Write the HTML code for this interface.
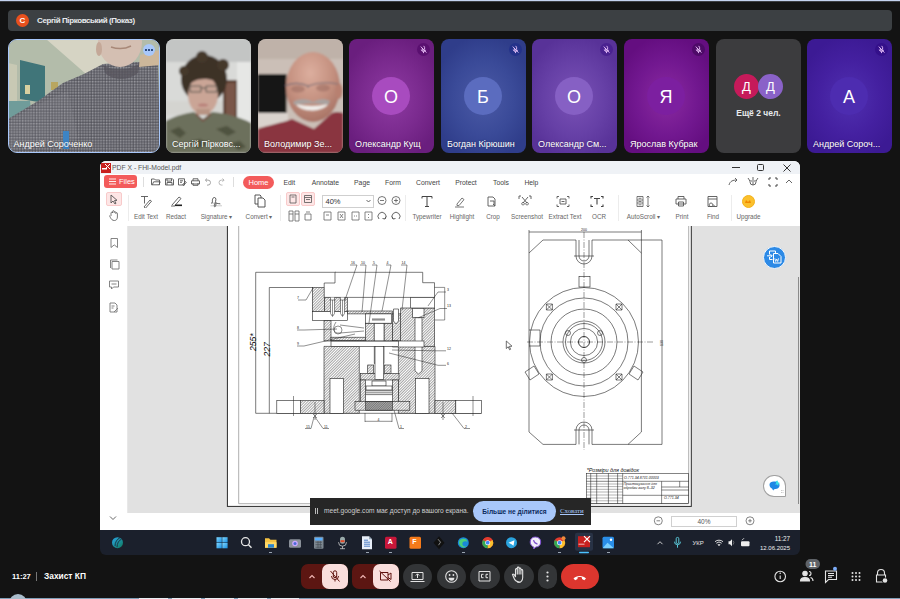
<!DOCTYPE html>
<html><head><meta charset="utf-8">
<style>
*{margin:0;padding:0;box-sizing:border-box}
html,body{width:900px;height:599px;overflow:hidden;background:#131313;font-family:"Liberation Sans",sans-serif}
.a{position:absolute}
#topline{left:0;top:0;width:900px;height:1px;background:#c4d3f0;box-shadow:0 1px 0 #3c3e42}
#banner{left:8px;top:10px;width:884px;height:21px;background:#3c4043;border-radius:4px}
#banner .av{left:8px;top:4px;width:13px;height:13px;border-radius:50%;background:#e8501d;color:#fff;font-size:8px;font-weight:bold;text-align:center;line-height:13px}
#banner .t{left:29px;top:4.5px;color:#e8eaed;font-size:8px;font-weight:bold;line-height:12px;letter-spacing:-0.4px}
.tile{top:39px;height:114px;width:85px;border-radius:8px;overflow:hidden}
.tile .nm{position:absolute;left:6px;bottom:3.5px;color:#fff;font-size:9px;line-height:11px;white-space:nowrap;text-shadow:0 0 2px rgba(0,0,0,.4)}
.tile .big{position:absolute;left:23px;top:38px;width:38px;height:38px;border-radius:50%;color:#fff;font-size:18px;text-align:center;line-height:41px}
.tile .mic{position:absolute;right:4px;top:4px;width:13px;height:13px;border-radius:50%}
.mb{position:absolute;top:564px;height:25px;border-radius:13px;background:#333537}
.lbl1{width:60px;text-align:center;font-size:6.8px;color:#444;line-height:10px}
.lbl2{width:60px;text-align:center;font-size:6.3px;color:#666;line-height:9px;white-space:nowrap}
.sep{width:1px;background:#ececec}
</style></head><body>
<div class="a" id="topline"></div>
<div class="a" id="banner"><div class="a av">С</div><div class="a t">Сергій Пірковський (Показ)</div></div>

<!-- tile 1 -->
<div class="a tile" style="left:8px;width:152px;border:1.5px solid #a8c7fa;border-radius:9px;background:#8a8f8a">
<svg class="a" style="left:-1.5px;top:-1.5px" width="152" height="114" viewBox="0 0 152 114"><defs><pattern id="chk" width="2.8" height="2.8" patternUnits="userSpaceOnUse"><rect width="2.8" height="2.8" fill="#67676e"/><rect width="1.4" height="1.4" fill="#a4a4aa"/><rect x="1.4" y="1.4" width="1.4" height="1.4" fill="#4c4c54"/></pattern></defs><defs><filter id="bl1" x="-5%" y="-5%" width="110%" height="110%"><feGaussianBlur stdDeviation="0.5"/></filter></defs><g filter="url(#bl1)">
<rect width="152" height="114" fill="#b3bcaa"/>
<polygon points="38,0 104,0 104,40 78,35" fill="#d6d4c4"/>
<polygon points="0,24 9,26 9,62 0,62" fill="#c8c9b4"/>
<polygon points="12,21 37,27 37,64 12,60" fill="#407479"/>
<rect x="17" y="46" width="5" height="9" fill="#d8d0a0"/>
<rect x="43" y="43" width="7" height="8" fill="#b8a660"/>
<polygon points="0,62 22,62 24,80 0,82" fill="#6f9c9a"/>
<path d="M0,80 L30,62 L55,44 L76,35 L95,25 L150,22 L152,114 L0,114 Z" fill="url(#chk)"/>
<path d="M0,80 L30,62 L55,44 L76,35 L95,25 L150,22 L152,114 L0,114 Z" fill="#707078" opacity="0.25"/><path d="M0,82 C20,70 40,60 60,52 L70,100 L0,110 Z" fill="#9a9aa0" opacity="0.15"/>
<ellipse cx="112" cy="3" rx="22" ry="25" fill="#d4bfb2"/>
<ellipse cx="91" cy="10" rx="3" ry="7" fill="#c4a898"/>
<path d="M103,8 C109,10 117,10 123,7" stroke="#a88878" stroke-width="1.5" fill="none"/>
<path d="M95,26 C104,32 122,32 132,24 L130,34 C120,42 106,42 97,34 Z" fill="#55535b" opacity="0.7"/>
<polygon points="132,16 152,11 152,26 131,28" fill="#cdb79a"/>
<rect x="55" y="92" width="6" height="18" fill="#3c84c4"/>
</g></svg>
<div class="nm" style="left:4.5px;bottom:2.5px">Андрей Сороченко</div>
<div class="a" style="left:134px;top:4px;width:12px;height:12px;border-radius:50%;background:#a8c7fa"></div>
<div class="a" style="left:136.3px;top:9.1px;width:1.8px;height:1.8px;border-radius:50%;background:#0b2a5c"></div><div class="a" style="left:139.1px;top:9.1px;width:1.8px;height:1.8px;border-radius:50%;background:#0b2a5c"></div><div class="a" style="left:141.9px;top:9.1px;width:1.8px;height:1.8px;border-radius:50%;background:#0b2a5c"></div>
</div>

<!-- tile 2 -->
<div class="a tile" style="left:166px;background:#cfd0ce">
<svg class="a" style="left:0;top:0" width="85" height="114" viewBox="0 0 85 114"><defs><filter id="bl2" x="-5%" y="-5%" width="110%" height="110%"><feGaussianBlur stdDeviation="0.85"/></filter></defs><g filter="url(#bl2)">
<rect width="85" height="114" fill="#d9dad8"/>
<rect width="85" height="23" fill="#c3c5c4"/>
<rect x="0" y="62" width="85" height="14" fill="#d4d4d0"/>
<rect x="57" y="41" width="14" height="42" fill="#5e4236"/>
<rect x="60" y="44" width="9" height="34" fill="#7a5648"/>
<rect x="71" y="23" width="14" height="60" fill="#e6e7e5"/>
<ellipse cx="38" cy="40" rx="23" ry="24" fill="#3d3128"/><circle cx="18" cy="32" r="5" fill="#45372c"/><circle cx="57" cy="26" r="6" fill="#45372c"/><circle cx="36" cy="18" r="6" fill="#45372c"/>
<ellipse cx="37" cy="56" rx="15" ry="19.5" fill="#caa596"/>
<path d="M21,48 C24,38 32,34 40,35 C48,36 54,40 56,48 C52,42 46,40 38,40 C30,40 25,43 21,48 Z" fill="#3d3128"/>
<ellipse cx="37" cy="66" rx="5" ry="1.6" fill="#b87f78"/>
<path d="M24,47 h11 v6 h-11 z M40,47 h11 v6 h-11 z M35,49 h5" stroke="#4a4a44" stroke-width="0.9" fill="#bfa090" fill-opacity="0.4"/>
<rect x="30" y="70" width="14" height="6" fill="#b89484"/>
<path d="M0,114 L0,82 C10,76 22,74 28,73 L37,80 L46,73 C58,74 75,78 85,84 L85,114 Z" fill="#6c6f5b"/>
<path d="M4,92 l9,-4 l7,6 l-6,5 z M50,90 l11,-3 l9,6 l-8,4 z M22,104 l12,-4 l8,5 l-10,5 z M66,104 l8,-2 l6,6 l-8,3 z" fill="#50533f"/>
<path d="M30,75 L37,82 L45,75" stroke="#7a4a40" stroke-width="1.2" fill="none"/>
</g></svg>
<div class="nm">Сергій Пірковс...</div>
</div>

<!-- tile 3 -->
<div class="a tile" style="left:258px;background:#c4b7ae">
<svg class="a" style="left:0;top:0" width="85" height="114" viewBox="0 0 85 114"><defs><radialGradient id="hd" cx="0.45" cy="0.3" r="0.7"><stop offset="0" stop-color="#dcae9e"/><stop offset="0.6" stop-color="#c4907f"/><stop offset="1" stop-color="#a87466"/></radialGradient><filter id="bl3" x="-5%" y="-5%" width="110%" height="110%"><feGaussianBlur stdDeviation="0.8"/></filter></defs><g filter="url(#bl3)">
<rect width="85" height="114" fill="#cbbfb7"/>
<rect y="0" width="85" height="20" fill="#bfb2a9"/>
<rect x="0" y="35" width="28.5" height="39" fill="#141212"/>
<rect x="0" y="74" width="30" height="14" fill="#dad3ce"/>
<ellipse cx="55" cy="48" rx="27" ry="35" fill="url(#hd)"/>
<ellipse cx="81" cy="52" rx="3.5" ry="8" fill="#b88070"/>
<ellipse cx="40" cy="50" rx="7" ry="3.5" fill="#9c6e62" opacity="0.6"/><ellipse cx="65" cy="49" rx="7" ry="3.5" fill="#9c6e62" opacity="0.6"/><path d="M27,47 C34,43 44,44 50,47 C58,44 70,43 80,45 M50,47 v2" stroke="#7a7078" stroke-width="1.2" fill="none"/>
<path d="M35,63 C42,59 50,60 55,63 C60,60 66,59 72,62 L70,66 C62,64 46,64 37,66 Z" fill="#a9a3a0"/>
<path d="M39,66 C46,72 60,73 69,66 C60,68 48,68 39,66 Z" fill="#f3f1ef" stroke="#ece8e4" stroke-width="1.5"/>
<path d="M0,114 L0,90 C10,86 24,84 34,80 L56,90 L74,74 C80,72 85,74 85,74 L85,114 Z" fill="#8a3541"/>
</g></svg>
<div class="nm">Володимир Зе...</div>
</div>

<!-- tile 4 -->
<div class="a tile" style="left:349px;background:radial-gradient(ellipse 60% 55% at 50% 52%,#8e3aa2 0%,#7a2a8e 60%,#6a1e7e 100%)">
<div class="mic" style="background:#5a1070"><svg width="13" height="13" viewBox="0 0 13 13" style="position:absolute;left:0;top:0"><path d="M6.5,3.3 a1.1,1.1 0 0 1 1.1,1.1 v2.3 M5.4,5 v1.8 a1.1,1.1 0 0 0 1.9,0.7 M4.3,6.6 a2.2,2.2 0 0 0 4.3,0.3 M6.5,8.9 v1.2 M3.8,3.6 l5.6,6" stroke="#f0c8ff" stroke-width="0.9" fill="none"/></svg></div>
<div class="big" style="background:#a84bbf">О</div>
<div class="nm">Олександр Кущ</div>
</div>
<!-- tile 5 -->
<div class="a tile" style="left:441px;background:radial-gradient(ellipse 60% 55% at 50% 52%,#4b5aa6 0%,#3a4a98 60%,#2f3d8a 100%)">
<div class="mic" style="background:#24328a"><svg width="13" height="13" viewBox="0 0 13 13" style="position:absolute;left:0;top:0"><path d="M6.5,3.3 a1.1,1.1 0 0 1 1.1,1.1 v2.3 M5.4,5 v1.8 a1.1,1.1 0 0 0 1.9,0.7 M4.3,6.6 a2.2,2.2 0 0 0 4.3,0.3 M6.5,8.9 v1.2 M3.8,3.6 l5.6,6" stroke="#f0c8ff" stroke-width="0.9" fill="none"/></svg></div>
<div class="big" style="background:#5b6cbf">Б</div>
<div class="nm">Богдан Кірюшин</div>
</div>
<!-- tile 6 -->
<div class="a tile" style="left:532px;background:radial-gradient(ellipse 60% 55% at 50% 52%,#7a52b6 0%,#6640a6 60%,#583298 100%)">
<div class="mic" style="background:#4a2290"><svg width="13" height="13" viewBox="0 0 13 13" style="position:absolute;left:0;top:0"><path d="M6.5,3.3 a1.1,1.1 0 0 1 1.1,1.1 v2.3 M5.4,5 v1.8 a1.1,1.1 0 0 0 1.9,0.7 M4.3,6.6 a2.2,2.2 0 0 0 4.3,0.3 M6.5,8.9 v1.2 M3.8,3.6 l5.6,6" stroke="#f0c8ff" stroke-width="0.9" fill="none"/></svg></div>
<div class="big" style="background:#8660c4">О</div>
<div class="nm">Олександр См...</div>
</div>
<!-- tile 7 -->
<div class="a tile" style="left:624px;background:radial-gradient(ellipse 60% 55% at 50% 52%,#8a2aa0 0%,#721890 60%,#640e80 100%)">
<div class="mic" style="background:#4e0a68"><svg width="13" height="13" viewBox="0 0 13 13" style="position:absolute;left:0;top:0"><path d="M6.5,3.3 a1.1,1.1 0 0 1 1.1,1.1 v2.3 M5.4,5 v1.8 a1.1,1.1 0 0 0 1.9,0.7 M4.3,6.6 a2.2,2.2 0 0 0 4.3,0.3 M6.5,8.9 v1.2 M3.8,3.6 l5.6,6" stroke="#f0c8ff" stroke-width="0.9" fill="none"/></svg></div>
<div class="big" style="background:#7c1fa0">Я</div>
<div class="nm">Ярослав Кубрак</div>
</div>
<!-- tile 8 -->
<div class="a tile" style="left:716px;background:#3c3c3e">
<div class="a" style="left:18px;top:35px;width:25px;height:25px;border-radius:50%;background:#c61a5a;color:#fff;font-size:13px;text-align:center;line-height:25px">Д</div>
<div class="a" style="left:42px;top:35px;width:25px;height:25px;border-radius:50%;background:#8a62c8;color:#fff;font-size:13px;text-align:center;line-height:25px">Д</div>
<div class="a" style="left:0;top:69px;width:85px;text-align:center;color:#e8eaed;font-size:8.5px;font-weight:bold">Ещё 2 чел.</div>
</div>
<!-- tile 9 -->
<div class="a tile" style="left:807px;background:radial-gradient(ellipse 60% 55% at 50% 52%,#5030b0 0%,#4420a0 60%,#3c1a94 100%)">
<div class="mic" style="background:#34108a"><svg width="13" height="13" viewBox="0 0 13 13" style="position:absolute;left:0;top:0"><path d="M6.5,3.3 a1.1,1.1 0 0 1 1.1,1.1 v2.3 M5.4,5 v1.8 a1.1,1.1 0 0 0 1.9,0.7 M4.3,6.6 a2.2,2.2 0 0 0 4.3,0.3 M6.5,8.9 v1.2 M3.8,3.6 l5.6,6" stroke="#f0c8ff" stroke-width="0.9" fill="none"/></svg></div>
<div class="big" style="background:#4d2cb0">А</div>
<div class="nm">Андрей Сороч...</div>
</div>

<!-- PDF WINDOW -->
<div id="win" class="a" style="left:100px;top:161px;width:700px;height:394px;border-radius:6px;overflow:hidden">
<div class="a" style="left:0;top:0;width:700px;height:369px;background:#fff"></div>
<div class="a" style="left:0;top:0;width:700px;height:12.5px;background:#eff2f6"></div>
<div class="a" style="left:0;top:64.6px;width:700px;height:287px;background:#e1e1e1"></div>
<div class="a" style="left:0;top:64.6px;width:28px;height:287px;background:#fff;border-right:1px solid #e8e8e8"></div>
<div class="a" style="left:0;top:368.8px;width:700px;height:26px;background:#1b202c"></div>
</div>
<!-- drawing -->
<div class="a" style="left:128px;top:225.6px;width:672px;height:286.7px;overflow:hidden">
<svg class="a" style="left:-128px;top:-225.6px" width="900" height="599" viewBox="0 0 900 599">
<defs>
<pattern id="h" width="1.95" height="1.95" patternUnits="userSpaceOnUse" patternTransform="rotate(45)"><rect width="1.95" height="1.95" fill="#fff"/><line x1="0" y1="0" x2="0" y2="1.95" stroke="#3a3a3a" stroke-width="0.9"/></pattern>
<pattern id="hx" width="1.6" height="1.6" patternUnits="userSpaceOnUse" patternTransform="rotate(45)"><rect width="1.6" height="1.6" fill="#aaa"/><line x1="0" y1="0" x2="0" y2="1.6" stroke="#333" stroke-width="0.7"/></pattern>
</defs>
<!-- page -->
<rect x="227.4" y="150" width="463.9" height="356.4" fill="#fff" stroke="#2a2a2a" stroke-width="1"/>
<path d="M238.7,150 V503.7 H688.7 V150" fill="none" stroke="#9a9a9a" stroke-width="0.8"/>
<g stroke="#222" stroke-width="0.6" fill="none">
<!-- dims left -->
<path d="M255.7,272.3 V413.3 M255.7,272.3 H336 M269.3,287.5 V413.3 M269.3,287.5 H312.5 M255.7,413.3 H481.5"/>
</g>
<text x="0" y="0" transform="translate(256,351) rotate(-90)" font-size="8.6" font-style="italic" fill="#111" font-family="Liberation Sans">255*</text>
<text x="0" y="0" transform="translate(269.5,356.5) rotate(-90)" font-size="8.6" font-style="italic" fill="#111" font-family="Liberation Sans">227</text>
<!-- hatched bodies -->
<g stroke="#222" stroke-width="0.6">
<rect x="312.3" y="287.6" width="12.2" height="23.9" fill="url(#h)"/>
<rect x="324.5" y="297.5" width="22.8" height="14" fill="url(#h)"/>
<rect x="347.3" y="311" width="45" height="2.9" fill="url(#h)"/>
<rect x="400.7" y="308" width="34" height="38.4" fill="url(#h)"/>
<rect x="324" y="320.3" width="7" height="20.7" fill="url(#h)"/>
<rect x="331" y="337.2" width="34.4" height="3.5" fill="url(#h)"/>
<rect x="365.4" y="323.2" width="8.8" height="22.2" fill="url(#h)"/>
<rect x="384" y="323.2" width="8.5" height="22.2" fill="url(#h)"/>
<rect x="392.5" y="313.9" width="8.2" height="27.1" fill="url(#h)"/>
<!-- columns -->
<path d="M324,346.4 H359.3 V413.3 H324 Z" fill="url(#h)"/>
<path d="M398.4,346.4 H435 V413.3 H398.4 Z" fill="url(#h)"/>
<rect x="300.6" y="400.6" width="23.4" height="12.7" fill="url(#h)"/>
<rect x="435" y="400.6" width="20.8" height="12.7" fill="url(#h)"/>
<!-- slots -->
<rect x="330" y="378.6" width="13.3" height="34.7" fill="#fff"/>
<rect x="415.5" y="378.6" width="13.5" height="34.7" fill="#fff"/>
<!-- bolt right -->
<rect x="412.7" y="308.2" width="11.3" height="9.5" fill="#fff"/>
<path d="M415,317.7 H422 V371 L418.5,374 L415,371 Z" fill="#fff"/>
<rect x="392.7" y="341" width="31.3" height="6" fill="#fff"/>
<!-- feet -->
<rect x="276.8" y="400.6" width="23.8" height="12.7" fill="#fff"/>
<rect x="455.8" y="400.6" width="25.7" height="12.7" fill="#fff"/>
<!-- inner -->
<rect x="367.7" y="365" width="6" height="8.4" fill="url(#h)"/>
<rect x="384.4" y="365" width="6.6" height="8.4" fill="url(#h)"/>
<rect x="360.3" y="373.4" width="38.7" height="6.6" fill="url(#h)"/>
<rect x="360.3" y="380" width="5.4" height="26.8" fill="url(#h)"/>
<rect x="392.4" y="380" width="6" height="26.8" fill="url(#h)"/>
<rect x="355" y="401.5" width="54.8" height="8.7" fill="url(#h)"/>
<rect x="365.7" y="401.5" width="26.7" height="8.7" fill="url(#hx)"/>
</g>
<!-- white blocks / outlines -->
<g stroke="#222" stroke-width="0.6" fill="#fff">
<path d="M335,272.3 H422.7 V282.7 H434.5 V297.4 H324.2 V283 H335 Z"/>
<rect x="312.3" y="311.5" width="35" height="8.8"/>
<path d="M330.5,297.5 v16 l2,3 l2,-3 v-16 z M340.5,297.5 v16 l2,3 l2,-3 v-16 z" fill="#fff" stroke="none"/>
<rect x="410.7" y="297.4" width="23.8" height="10.6"/>
<rect x="374.2" y="323.2" width="9.8" height="40"/>
<rect x="365.4" y="313.9" width="26.3" height="9.3"/>
<path d="M372,319 h13 M372,320 h13" fill="none"/>
<path d="M393.5,309 h5 v12 l-2.5,3 l-2.5,-3 z" fill="#fff"/>
<rect x="331" y="341" width="67.4" height="5.4"/>
<rect x="375" y="346.4" width="8.7" height="33"/>
<rect x="372" y="381" width="14" height="5"/>
<rect x="366" y="386" width="26" height="4"/>
<path d="M365.7,390.8 H392.4 M365.7,392.8 H392.4 M365.7,394.6 H392.4" fill="none"/>
</g>
<g stroke="#222" stroke-width="0.5" fill="none">
<path d="M434.5,287.4 H444.7 V320 H434.7"/>
<path d="M331,341 H398.4"/>
<!-- lever -->
<path d="M336,322 C332,328 333,334 340,333 L364,331 M340,325 L364,328"/>
<circle cx="338" cy="330" r="4"/>
<!-- small bolts left -->
<path d="M330.5,297.5 v16 l2,3 l2,-3 v-16 M340.5,297.5 v16 l2,3 l2,-3 v-16 M329.5,300 h6 M339.5,300 h6 M332.5,300 v16 M342.5,300 v16"/>
<!-- leaders -->
<path d="M298,300 L306,300 L313,288 M297,330 L304,330 L337,329 M297,346 L304,346 L355,334 M350,265 L357,265 L345,300 M360,265 L366,265 L362,312 M372,265 L377,265 L369,323 M386,265 L391,265 L382,311 M401,265 L407,265 L402,310 M446,292 L438,292 L428,306 M447,308.5 L440,308.5 L418.5,317.7 M446,350.8 L434,350.8 M434,350.8 L392,350 M446,365.3 L438,365.3 L389,353 M464,428.5 L470,428.5 M464,428.5 L452,413 M399,428.5 L404,428.5 M399,428.5 L394,410 M323,428.5 L329,428.5 M323,428.5 L315,417 M305,428.5 L311,428.5 M311,428.5 L314,417 M293.5,396 V416 M473,396 V416"/>
<path d="M365,413 V422 M392,413 V422 M365,421.3 H392"/>
<path d="M315,402 V420 M313,414 l2,2 l2,-2 M313,418 l2,-2 l2,2 M443,402 V420 M441,414 l2,2 l2,-2 M441,418 l2,-2 l2,2"/>
</g>
<g font-family="Liberation Sans" font-size="3.5" fill="#222">
<text x="351" y="264">16</text><text x="361" y="264">10</text><text x="373" y="264">5</text><text x="386.5" y="264">4</text><text x="401.5" y="264">14</text>
<text x="297" y="299">7</text><text x="297" y="329">8</text><text x="297" y="345">9</text>
<text x="447" y="291">3</text><text x="447" y="307">13</text><text x="447" y="350">12</text><text x="447" y="364.5">6</text>
<text x="306" y="427.5">15</text><text x="324" y="427.5">11</text><text x="377.5" y="420.5">4</text><text x="400" y="427.5">1</text><text x="465" y="427.5">2</text>
</g>
<!-- right view -->
<g stroke="#222" stroke-width="0.6" fill="none">
<path d="M529,232 H641.4 M529,230 V253 M641.4,230 V253"/>
<path d="M543,240 H576 M592,240 H628 M529,253 L543,240 M628,240 L641.4,253 M529,253 V432 L543,444.4 H576 M592,444.4 H628 L641.4,432 V253"/>
<path d="M628,240 H662 M628,444.4 H662 M662,240 V444.4"/>
<path d="M576,240 V256 A8,8 0 0 0 592,256 V240 M579,240 V256 A5,5 0 0 0 589,256 V240 M574,256 H594"/>
<path d="M576,444.4 V430 A8,8 0 0 1 592,430 V444.4 M579,444.4 V430 A5,5 0 0 1 589,430 V444.4 M574,430 H594"/>
<rect x="579" y="276.6" width="11" height="10.4"/>
<circle cx="584" cy="342" r="54.5"/>
<circle cx="584" cy="342" r="44"/>
<circle cx="584" cy="342" r="33"/>
<circle cx="584" cy="342" r="21"/>
<circle cx="584" cy="342" r="18.5"/>
<circle cx="584" cy="342" r="13.6"/>
<circle cx="584" cy="342" r="5.5" stroke-width="0.9"/>
<path d="M527,342 H653 M584,232 V450" stroke-dasharray="6,1.5,1,1.5" stroke-width="0.45"/>
<path d="M529,330 h11 v16 h-11 M525,372 l9,-6 l5,8 l-9,6 z M643,372 l-9,-6 l-5,8 l9,6 z"/>
<path d="M546.4,304 l6,6 m0,-6 l-6,6 M546.4,304 h6 v6 h-6 z M616,304 l6,6 m0,-6 l-6,6 M616,304 h6 v6 h-6 z"/>
<path d="M546.4,374 l6,6 m0,-6 l-6,6 M546.4,374 h6 v6 h-6 z M616,374 l6,6 m0,-6 l-6,6 M616,374 h6 v6 h-6 z"/>
<circle cx="568" cy="333" r="2.5"/><circle cx="600" cy="333" r="2.5"/><circle cx="584" cy="360" r="2.5"/>
</g>
<g font-family="Liberation Sans" font-size="3.5" fill="#222"><text x="581" y="231">200</text><text x="0" y="0" transform="translate(663,346) rotate(-90)">130</text></g>
<path d="M506.3,341 V348.5 L508.2,346.8 L509.6,349.8 L510.6,349.3 L509.3,346.4 L512,346.2 Z" fill="#fff" stroke="#333" stroke-width="0.7"/>
<!-- title block -->
<text x="586.7" y="472" font-family="Liberation Sans" font-size="5.4" font-style="italic" fill="#111">*Розміри для довідок</text>
<g stroke="#222" stroke-width="0.55" fill="none">
<rect x="586.4" y="473.3" width="102.3" height="30.4"/>
<path d="M590.7,473.3 V503.7 M596.7,473.3 V503.7 M608.4,473.3 V503.7 M617.6,473.3 V503.7 M622.7,473.3 V503.7 M586.4,481.3 H688.7 M622.7,495.3 H688.7 M661.6,481.3 V503.7 M679.7,481.3 V487 M661.6,487 H688.7 M661.6,490 H688.7"/>
<path d="M586.4,476 H622.7 M586.4,478.6 H622.7 M586.4,484 H622.7 M586.4,486.6 H622.7 M586.4,489.3 H622.7 M586.4,492 H622.7 M586.4,495 H622.7 M586.4,498 H622.7 M586.4,500.8 H622.7" stroke-width="0.35"/>
</g>
<g font-family="Liberation Sans" font-size="3.6" font-style="italic" fill="#222"><text x="624" y="478.6">О.771.34.8701.00003</text><text x="623.5" y="485">Пристосування для</text><text x="623.5" y="489">обробки валу 8–32</text><text x="664" y="499">О.771.34</text></g>
</svg>
</div>

<!-- title -->
<svg class="a" style="left:100.5px;top:162.5px" width="10" height="10" viewBox="0 0 10 10"><rect width="10" height="10" fill="#c8201e"/><path d="M4,1 L9,6 M9,1 L5,5" stroke="#fff" stroke-width="1"/><rect x="1" y="5" width="5" height="1.5" fill="#fff"/></svg>
<div class="a" style="left:112px;top:163px;font-size:6.8px;color:#555;line-height:10px">PDF X - FHI-Model.pdf</div>
<div class="a" style="left:732px;top:167px;width:8px;height:1px;background:#333"></div>
<div class="a" style="left:757px;top:164px;width:7px;height:7px;border:1px solid #333;border-radius:1.5px"></div>
<svg class="a" style="left:783px;top:163.5px" width="8" height="8" viewBox="0 0 8 8"><path d="M0.5,0.5 L7.5,7.5 M7.5,0.5 L0.5,7.5" stroke="#333" stroke-width="1"/></svg>
<!-- ribbon row1 -->
<div class="a" style="left:104px;top:175px;width:33px;height:13px;background:#f35b5b;border-radius:3px"></div><div class="a" style="left:119px;top:175px;color:#fff;font-size:7.5px;line-height:13px">Files</div>
<svg class="a" style="left:109px;top:178px" width="7" height="7" viewBox="0 0 7 7"><path d="M0,1 H7 M0,3.5 H7 M0,6 H7" stroke="#fff" stroke-width="0.9"/></svg>
<div class="a" style="left:142.5px;top:177px;width:1px;height:10px;background:#ddd"></div>
<div class="a" style="left:233px;top:177px;width:1px;height:10px;background:#ddd"></div>
<div class="a" style="left:243px;top:175.5px;width:31px;height:13px;background:#f35b5b;border-radius:7px;color:#fff;font-size:7.5px;line-height:13px;text-align:center">Home</div>
<!-- sidebar icons -->
<svg class="a" style="left:107px;top:236px" width="14" height="80" viewBox="0 0 14 80">
<path d="M4,2.5 h6.5 v9 l-3.25,-2.6 l-3.25,2.6 z" stroke="#777" stroke-width="0.9" fill="none"/>
<path d="M3.5,32 v-8 h7 M5,25.5 h7 v7.5 h-7 z" stroke="#777" stroke-width="0.9" fill="none"/>
<path d="M2.5,45 h9 v6 h-5 l-2,2 v-2 h-2 z M4.5,48 h5" stroke="#777" stroke-width="0.9" fill="none"/>
<path d="M3,67 h5 l2,2 v7 h-7 z M4.5,70 h3 M4.5,72 h2 M7,76 l4,-4" stroke="#777" stroke-width="0.9" fill="none"/>
</svg>
<svg class="a" style="left:109px;top:515px" width="8" height="6" viewBox="0 0 8 6"><path d="M1,1.5 l3,3 l3,-3" stroke="#555" stroke-width="0.9" fill="none"/></svg>
<!-- status bar -->
<svg class="a" style="left:652px;top:515px" width="104" height="12" viewBox="0 0 104 12">
<circle cx="6.3" cy="5.8" r="4" stroke="#666" stroke-width="0.8" fill="none"/><path d="M4.5,5.8 h3.6" stroke="#666" stroke-width="0.8"/>
<circle cx="98" cy="5.8" r="4" stroke="#666" stroke-width="0.8" fill="none"/><path d="M96.2,5.8 h3.6 M98,4 v3.6" stroke="#666" stroke-width="0.8"/>
</svg>
<div class="a" style="left:671px;top:515.5px;width:66px;height:11px;border:1px solid #d0d0d0;font-size:6.5px;color:#555;text-align:center;line-height:9px">40%</div>
<!-- scrollbar -->
<div class="a" style="left:797.8px;top:277px;width:1px;height:227px;background:#8a8a8a"></div>
<!-- blue float buttons -->
<div class="a" style="left:763px;top:246px;width:23px;height:23px;border-radius:50%;background:#2d8ae6;border:1px solid #f4f8fc"></div>
<svg class="a" style="left:764px;top:247px" width="21" height="21" viewBox="764 247 21 21"><path d="M769.5,254.5 v-3.5 h6 v2 M769.5,257 v2.5 h3" stroke="#fff" stroke-width="1" fill="none"/><path d="M767,255.8 h5 M770.5,254.2 l1.6,1.6 l-1.6,1.6" stroke="#fff" stroke-width="1" fill="none"/><path d="M773.5,253.5 h4.5 l3,3 v6.5 h-7.5 z" stroke="#fff" stroke-width="1" fill="none"/><path d="M774.8,258.3 l0.9,3.2 l1,-2.5 l1,2.5 l0.9,-3.2" stroke="#fff" stroke-width="0.8" fill="none"/></svg>
<div class="a" style="left:763px;top:474.5px;width:22.5px;height:22.5px;border-radius:11.5px 11.5px 1px 11.5px;background:#fff;border:1px solid #a0a0a0"></div>
<svg class="a" style="left:764px;top:475px" width="21" height="21" viewBox="764 475 21 21"><path d="M769.5,484.5 c0,-2.5 3,-3.5 5.5,-3 c3,0.5 5,2 4.5,4.5 c-0.5,2 -2,3 -4,3 c-1,0 -2,0.5 -2,1.5 c-1,-0.5 -1,-1.5 -1.5,-2 c-1.5,-0.5 -2.5,-2 -2.5,-4 z" fill="#1e88e5"/><path d="M777.5,480.5 l0.8,2 l1.8,0.6 l-1.6,0.9 l-0.3,2 l-1.2,-1.6 l-2,0.1 l1.3,-1.5 l-0.6,-1.8 z" fill="#3ee0e8"/><g fill="#aaa"><rect x="781" y="490" width="0.8" height="0.8"/><rect x="782.6" y="490" width="0.8" height="0.8"/><rect x="781" y="492" width="0.8" height="0.8"/><rect x="782.6" y="492" width="0.8" height="0.8"/></g></svg>
<!-- notification -->
<div class="a" style="left:309.7px;top:498px;width:281px;height:26.7px;background:#262626"></div>
<div class="a" style="left:315px;top:507.5px;width:1px;height:6px;background:#bbb;box-shadow:2px 0 0 #bbb"></div>
<div class="a" style="left:324px;top:506px;color:#cfcfcf;font-size:6.6px;line-height:10px;white-space:nowrap">meet.google.com має доступ до вашого екрана.</div>
<div class="a" style="left:473px;top:500.8px;width:83px;height:21.2px;border-radius:11px;background:#a8c7fa;color:#0b2a5c;font-size:6.6px;font-weight:bold;text-align:center;line-height:21px;white-space:nowrap">Більше не ділитися</div>
<div class="a" style="left:560px;top:506px;color:#a8c7fa;font-size:6.8px;line-height:10px;text-decoration:underline;font-family:'Liberation Serif',serif">Сховати</div>
<!-- ribbon -->
<div class="a lbl1" style="left:259.4px;top:177.8px">Edit</div>
<div class="a lbl1" style="left:295.4px;top:177.8px">Annotate</div>
<div class="a lbl1" style="left:332px;top:177.8px">Page</div>
<div class="a lbl1" style="left:363px;top:177.8px">Form</div>
<div class="a lbl1" style="left:398px;top:177.8px">Convert</div>
<div class="a lbl1" style="left:436px;top:177.8px">Protect</div>
<div class="a lbl1" style="left:471px;top:177.8px">Tools</div>
<div class="a lbl1" style="left:501.4px;top:177.8px">Help</div>
<div class="a lbl2" style="left:116px;top:211.5px">Edit Text</div>
<div class="a lbl2" style="left:146px;top:211.5px">Redact</div>
<div class="a lbl2" style="left:186.5px;top:211.5px">Signature ▾</div>
<div class="a lbl2" style="left:229px;top:211.5px">Convert ▾</div>
<div class="a lbl2" style="left:397px;top:211.5px">Typewriter</div>
<div class="a lbl2" style="left:432px;top:211.5px">Highlight</div>
<div class="a lbl2" style="left:463px;top:211.5px">Crop</div>
<div class="a lbl2" style="left:497px;top:211.5px">Screenshot</div>
<div class="a lbl2" style="left:535px;top:211.5px">Extract Text</div>
<div class="a lbl2" style="left:569px;top:211.5px">OCR</div>
<div class="a lbl2" style="left:613.5px;top:211.5px">AutoScroll ▾</div>
<div class="a lbl2" style="left:652px;top:211.5px">Print</div>
<div class="a lbl2" style="left:683px;top:211.5px">Find</div>
<div class="a lbl2" style="left:718.5px;top:211.5px">Upgrade</div>
<!-- row1 icons -->
<svg class="a" style="left:149px;top:176px" width="80" height="12" viewBox="149 176 80 12">
<path d="M151.5,179 h3 l1,1 h4 v4.8 h-8 z M152.3,184.8 l1.3,-3 h6.6 l-1.2,3" stroke="#555" stroke-width="0.9" fill="none"/>
<path d="M165.5,178.8 h7 l1,1 v5.2 h-8 z M167,178.8 v2.3 h4.5 v-2.3 M167,185 v-2.5 h5 v2.5" stroke="#555" stroke-width="0.9" fill="none"/>
<path d="M178.5,178.8 h6 v6.2 h-6 z M180,180.8 h3 M180,182.3 h2 M182.5,185 l3,-3.5 l0.8,0.8 l-3,3.5" stroke="#555" stroke-width="0.9" fill="none"/>
<path d="M191.5,180.8 h8 v3.2 h-8 z M193,180.8 v-2 h5 v2 M193,183 v2.3 h5 v-2.3" stroke="#555" stroke-width="0.9" fill="none"/>
<path d="M207,178.5 l-1.6,1.6 l1.6,1.6 M205.5,180.1 h2.5 a2.5,2.5 0 0 1 0,5 h-1" stroke="#9a9a9a" stroke-width="0.9" fill="none"/>
<path d="M222.5,178.5 l1.6,1.6 l-1.6,1.6 M224,180.1 h-2.5 a2.5,2.5 0 0 0 0,5 h1" stroke="#b0b0b0" stroke-width="0.9" fill="none"/>
</svg>
<svg class="a" style="left:727px;top:176px" width="68" height="12" viewBox="0 0 68 12">
<path d="M2,9 C3,5 6,4 10,4 L8,2 M10,4 L8,6" stroke="#555" stroke-width="0.9" fill="none"/>
<path d="M22,5 h8 M23,6 a3,3 0 0 0 6,0 M26,6 v3 M21,2 l2,3 M31,2 l-2,3 M26,1 v3" stroke="#555" stroke-width="0.9" fill="none"/>
<path d="M42,2 h2 M42,2 v2 M50,2 h-2 M50,2 v2 M42,10 h2 M42,10 v-2 M50,10 h-2 M50,10 v-2" stroke="#444" stroke-width="1" fill="none"/>
<path d="M59,7 l3,-3 l3,3" stroke="#555" stroke-width="0.9" fill="none"/>
</svg>
<!-- row2 icons -->
<div class="a" style="left:106px;top:192px;width:16px;height:14px;background:#fde6e6;border:1px solid #f8caca;border-radius:2px"></div>
<svg class="a" style="left:108px;top:194px" width="12" height="11" viewBox="0 0 12 11"><path d="M3,1 L3,9 L5,7 L7,10 L8,9.3 L6.5,6.5 L9,6.3 Z" stroke="#555" stroke-width="0.9" fill="none"/></svg>
<svg class="a" style="left:109px;top:210px" width="10" height="11" viewBox="0 0 10 11"><path d="M2,6 v-3 a0.8,0.8 0 0 1 1.6,0 v-1.5 a0.8,0.8 0 0 1 1.6,0 v1 a0.8,0.8 0 0 1 1.6,0 v1 a0.8,0.8 0 0 1 1.6,0 v3.5 c0,2 -1,3.5 -3,3.5 c-2,0 -3,-1 -4,-3 l-1,-2" stroke="#555" stroke-width="0.8" fill="none"/></svg>
<div class="a sep" style="left:127.5px;top:195px;height:26px"></div>
<svg class="a" style="left:140px;top:195px" width="12" height="13" viewBox="0 0 12 13"><path d="M1,1.5 h7 M4.5,1.5 v7 M4,12 l6,-7 l1.5,1.2 l-6,7 z" stroke="#555" stroke-width="0.9" fill="none"/></svg>
<svg class="a" style="left:170px;top:195px" width="13" height="13" viewBox="0 0 13 13"><path d="M2,10 l7,-8 l2,1.5 l-6,7" stroke="#555" stroke-width="0.9" fill="none"/><rect x="5" y="9.5" width="7" height="1.6" fill="#222"/><path d="M1,11 h4" stroke="#555" stroke-width="0.9"/></svg>
<svg class="a" style="left:209px;top:194px" width="15" height="14" viewBox="209 194 15 14"><path d="M210.5,205.8 h11.5" stroke="#ccc" stroke-width="1" fill="none"/><path d="M211,203 h1 M213,203.5 c-1,-2 -1,-6 1.5,-6 c2,0 1.5,3.5 0.5,5.5 c-0.8,1.6 -1,3.8 -0.2,3.8 c1,0 1.3,-2.5 1,-4 c1,0.5 1.8,0.8 2.5,0.8 c0.5,0 1,0 2,0.3" stroke="#444" stroke-width="0.9" fill="none"/></svg>
<svg class="a" style="left:253px;top:194px" width="13" height="14" viewBox="0 0 13 14"><path d="M2,1 h5 l1,1 v2 M2,1 v9 h3 M5,4 h5 l2,2 v7 h-7 z" stroke="#444" stroke-width="0.9" fill="none"/></svg>
<div class="a sep" style="left:280px;top:195px;height:26px"></div>
<div class="a" style="left:286px;top:192px;width:14px;height:14px;background:#fde6e6;border:1px solid #f8caca;border-radius:2px"></div>
<div class="a" style="left:301px;top:192px;width:14px;height:14px;background:#fde6e6;border:1px solid #f8caca;border-radius:2px"></div>
<svg class="a" style="left:286px;top:192px" width="30" height="14" viewBox="0 0 30 14"><path d="M4,3 h6 v8 h-6 z M5.5,5 h3" stroke="#555" stroke-width="0.8" fill="none"/><path d="M18.5,3.5 h7 v7 h-7 z M18.5,5.5 h7 M20,7.5 h4" stroke="#555" stroke-width="0.8" fill="none"/></svg>
<div class="a" style="left:322px;top:195px;width:52px;height:12.5px;border:1px solid #cfcfcf;font-size:7.5px;line-height:11px;padding-left:2.5px;color:#333">40%</div>
<svg class="a" style="left:366px;top:199px" width="5" height="4" viewBox="0 0 5 4"><path d="M0.5,1 l2,2 l2,-2" stroke="#555" stroke-width="0.9" fill="none"/></svg>
<svg class="a" style="left:376px;top:195px" width="26" height="11" viewBox="0 0 26 11"><circle cx="6" cy="5.5" r="4" stroke="#555" stroke-width="0.8" fill="none"/><path d="M4,5.5 h4" stroke="#555" stroke-width="0.8"/><circle cx="20" cy="5.5" r="4" stroke="#555" stroke-width="0.8" fill="none"/><path d="M18,5.5 h4 M20,3.5 v4" stroke="#555" stroke-width="0.8"/></svg>
<svg class="a" style="left:286px;top:210px" width="116" height="12" viewBox="0 0 116 12">
<path d="M3,1 h4 v10 h-4 z M9,1 h4 v10 h-4 z M3,4 h4 M9,4 h4" stroke="#666" stroke-width="0.8" fill="none"/>
<path d="M19,4 h6 v6 h-6 z M20,2 h4" stroke="#666" stroke-width="0.8" fill="none"/>
<path d="M38,2 h7 v8 h-7 z M40,5 h3" stroke="#666" stroke-width="0.8" fill="none"/>
<path d="M52,2 h7 v8 h-7 z M54,4 l3,4 M57,4 l-3,4" stroke="#666" stroke-width="0.8" fill="none"/>
<path d="M66,2 h7 v8 h-7 z M68,6 h1 M70,6 h1" stroke="#666" stroke-width="0.8" fill="none"/>
<path d="M79,2 h7 v8 h-7 z M82.5,4 v1 M82.5,7 v1" stroke="#666" stroke-width="0.8" fill="none"/>
<path d="M93,9 a4,4 0 1 1 6,0 M99,9 l1,-2.5 M99,9 l-2.5,-0.5" stroke="#555" stroke-width="0.9" fill="none"/>
<path d="M113,9 a4,4 0 1 0 -6,0 M107,9 l-1,-2.5 M107,9 l2.5,-0.5" stroke="#555" stroke-width="0.9" fill="none"/>
</svg>
<div class="a sep" style="left:405px;top:195px;height:26px"></div>
<svg class="a" style="left:420px;top:195px" width="190" height="13" viewBox="0 0 190 13">
<path d="M2,1.5 h10 M2,1.5 v2 M12,1.5 v2 M7,1.5 v10 M5,11.5 h4" stroke="#444" stroke-width="1" fill="none"/>
<path d="M37,9 l5,-6 l2,1.6 l-5,6 h-2 z M35,12 h9" stroke="#666" stroke-width="0.9" fill="none"/>
<path d="M68,2 h5 l2,2 v7 h-7 z M70,6 h4 v4 M73,9 l2,2" stroke="#555" stroke-width="0.9" fill="none"/>
<path d="M101,1 h-2 v3 M109,1 h2 v3 M102,2 l5,6 M108,2 l-5,6 M103,10 a1.3,1.3 0 1 1 0.1,0 M107,10 a1.3,1.3 0 1 1 0.1,0" stroke="#555" stroke-width="0.9" fill="none"/>
<path d="M139,1.5 h-2 v2 M147,1.5 h2 v2 M139,11.5 h-2 v-2 M147,11.5 h2 v-2 M140,4 h6 v5 h-6 z M141.5,6.5 h3" stroke="#555" stroke-width="0.9" fill="none"/>
<path d="M173,1.5 h-2 v2 M181,1.5 h2 v2 M173,11.5 h-2 v-2 M181,11.5 h2 v-2 M174,3.5 h6 M177,3.5 v6" stroke="#444" stroke-width="1.1" fill="none"/>
</svg>
<div class="a sep" style="left:618px;top:195px;height:26px"></div>
<svg class="a" style="left:634px;top:195px" width="90" height="13" viewBox="0 0 90 13">
<path d="M3,1.5 h6 v10 h-6 z M3,5 h6 M3,8 h6 M4.5,3.3 h3 M4.5,6.5 h3 M4.5,9.8 h3 M14,1 v11 M12.5,2.5 l1.5,-1.5 l1.5,1.5 M12.5,10.5 l1.5,1.5 l1.5,-1.5" stroke="#555" stroke-width="0.8" fill="none"/>
<path d="M44,4 v-2.5 h6 v2.5 M42,4 h10 v5 h-10 z M44.5,7 h5 v4 h-5 z" stroke="#555" stroke-width="0.9" fill="none"/>
<path d="M74,1.5 h9 v10 h-9 z M74,4 h9 M77,8 a1.8,1.8 0 1 0 0.1,0 M79,9.5 l2,2" stroke="#555" stroke-width="0.9" fill="none"/>
</svg>
<div class="a sep" style="left:731px;top:195px;height:26px"></div>
<div class="a" style="left:741.5px;top:195px;width:13px;height:13px;border-radius:50%;background:#fbc02d;border:1px solid #f3b21a"></div>
<svg class="a" style="left:744px;top:198px" width="8" height="7" viewBox="0 0 8 7"><path d="M1,5 l1,-3 l2,2 l2,-2 l1,3 z" fill="#f08a00"/></svg>

<!-- taskbar -->
<svg class="a" style="left:100px;top:529.8px" width="700" height="25" viewBox="100 529.8 700 25">
<defs>
<linearGradient id="gl" x1="0" y1="0" x2="1" y2="1"><stop offset="0" stop-color="#2aa7e8"/><stop offset="1" stop-color="#0e7a5a"/></linearGradient>
<linearGradient id="wg" x1="0" y1="0" x2="1" y2="1"><stop offset="0" stop-color="#7fd6ff"/><stop offset="1" stop-color="#1a8fe0"/></linearGradient>
</defs>
<circle cx="117.5" cy="542.5" r="5.5" fill="url(#gl)"/>
<path d="M115,546 C115,542 117,539 120,537.5 M117,547 C117,543 119,540 121.5,539" stroke="#1b2131" stroke-width="0.8" fill="none"/>
<g transform="translate(216.5,537)"><rect width="5.3" height="5.3" fill="url(#wg)"/><rect x="5.8" width="5.3" height="5.3" fill="url(#wg)"/><rect y="5.8" width="5.3" height="5.3" fill="url(#wg)"/><rect x="5.8" y="5.8" width="5.3" height="5.3" fill="url(#wg)"/></g>
<circle cx="245.5" cy="541.5" r="4" stroke="#e8e8e8" stroke-width="1.3" fill="none"/><path d="M248.5,544.5 l3,3" stroke="#e8e8e8" stroke-width="1.4"/>
<path d="M265,538 h4 l1.5,1.5 h6 v8 h-11.5 z" fill="#f5c242"/><rect x="265" y="542" width="11.5" height="5.5" fill="#ffd866"/><rect x="268" y="544" width="6" height="3.5" fill="#2a84d0"/>
<rect x="289" y="539" width="12" height="8.5" rx="1.5" fill="#8a9099"/><circle cx="295" cy="543.3" r="2.8" fill="#c9a7ff"/><circle cx="295" cy="543.3" r="1.5" fill="#4b6bd6"/>
<rect x="314" y="536.5" width="9.5" height="12" rx="1" fill="#7d8790"/><rect x="315" y="537.5" width="7.5" height="2.8" fill="#5ab0ff"/><path d="M315.5,542 h6.5 M315.5,544.5 h6.5 M315.5,547 h6.5 M318,541 v7 M320.3,541 v7" stroke="#3c444c" stroke-width="0.6"/>
<rect x="340" y="536.5" width="5" height="7" rx="2.5" fill="#9aa"/><rect x="340.5" y="540" width="4" height="2" fill="#e04a2a"/><path d="M338.5,542 a4,4 0 0 0 8,0 M342.5,546 v2.5 M340,548.5 h5" stroke="#ccc" stroke-width="0.8" fill="none"/>
<path d="M362,536 h7 l3,3 v10 h-10 z" fill="#e8eef8"/><path d="M364,540 h4 M364,542 h6 M364,544 h6 M364,546 h6" stroke="#2a63b8" stroke-width="0.8"/><path d="M369,536 v3 h3" fill="#9ab"/>
<rect x="385" y="536.5" width="11.5" height="12" rx="1.5" fill="#c8173a"/><text x="387.8" y="544" font-size="7" font-weight="bold" fill="#fff" font-family="Liberation Sans">A</text>
<rect x="409.5" y="536.5" width="11.5" height="12" rx="1.5" fill="#f57a1a"/><text x="412.3" y="544" font-size="7" font-weight="bold" fill="#fff" font-family="Liberation Sans">F</text>
<path d="M439,536 l5.5,6.5 l-5.5,6.5 l-5.5,-6.5 z" fill="#111"/><path d="M438,539 l2.5,3 l-2,3" stroke="#bbb" stroke-width="0.7" fill="none"/>
<circle cx="463.3" cy="542.5" r="5.5" fill="#1a8ad8"/><path d="M459,543 a4.3,4.3 0 0 1 8.5,-1 c-1,-1.5 -6,-1.5 -5,2.5 c0.5,2 4,2.5 5.5,1.3 a5.5,5.5 0 0 1 -9,-2.8 z" fill="#4ad07a"/>
<circle cx="487.7" cy="542.5" r="5.5" fill="#e33b2e"/><path d="M487.7,542.5 L482.9,539.7 A5.5,5.5 0 0 1 492.5,539.7 Z" fill="#e33b2e"/><path d="M487.7,542.5 L492.5,539.7 A5.5,5.5 0 0 1 487.7,548 Z" fill="#fbc02d"/><path d="M487.7,542.5 L487.7,548 A5.5,5.5 0 0 1 482.9,539.7 Z" fill="#34a853"/><circle cx="487.7" cy="542.5" r="2.5" fill="#fff"/><circle cx="487.7" cy="542.5" r="1.9" fill="#4285f4"/>
<circle cx="511.5" cy="542.5" r="5.5" fill="#2aa3de"/><path d="M508.5,542.5 l6,-2.5 l-1,5.5 l-2,-1.5 z" fill="#fff"/>
<path d="M535.2,536.8 c3.5,0 5.5,2 5.5,5 c0,3 -2,5 -5,5 l-2,2 v-2 c-2,-1 -3.5,-2.5 -3.5,-5 c0,-3 2,-5 5,-5 z" fill="#f2eefb" stroke="#7d4fcf" stroke-width="1"/><path d="M533.5,540 c0.5,2 2,3.5 4,4" stroke="#7d4fcf" stroke-width="1.2" fill="none"/>
<circle cx="559.6" cy="542.5" r="5.5" fill="#e33b2e"/><path d="M559.6,542.5 L564.4,539.7 A5.5,5.5 0 0 1 559.6,548 Z" fill="#fbc02d"/><path d="M559.6,542.5 L559.6,548 A5.5,5.5 0 0 1 554.8,539.7 Z" fill="#34a853"/><circle cx="559.6" cy="542.5" r="2.5" fill="#fff"/><circle cx="559.6" cy="542.5" r="1.9" fill="#4285f4"/><circle cx="563.5" cy="538" r="2" fill="#f08a3a"/>
<rect x="575" y="532.5" width="18" height="18" rx="2" fill="#283245"/>
<rect x="578" y="536" width="12" height="11" fill="#c8201e"/><path d="M584,536 l6,6 M590,536 l-6,6" stroke="#fff" stroke-width="1.2"/><path d="M578.5,544 h6" stroke="#fff" stroke-width="0.7"/>
<rect x="579" y="551.5" width="10" height="1.5" rx="0.7" fill="#4cc2ff"/>
<rect x="602.5" y="536.5" width="11.5" height="11.5" rx="1.5" fill="#2a8ee8"/><path d="M602.5,548 l5,-5.5 l6.5,5.5 z" fill="#7ad0ff"/><circle cx="611" cy="539.5" r="1.2" fill="#fff"/>
<g fill="#9aa4b0"><rect x="269" y="551.8" width="3" height="1"/><rect x="366" y="551.8" width="3" height="1"/><rect x="389" y="551.8" width="3" height="1"/><rect x="462" y="551.8" width="3" height="1"/><rect x="558" y="551.8" width="3" height="1"/><rect x="607" y="551.8" width="3" height="1"/></g>
<path d="M657.5,544 l2.5,-2.5 l2.5,2.5" stroke="#ddd" stroke-width="0.9" fill="none"/>
<path d="M676.2,538.5 a1.3,1.3 0 0 1 2.6,0 v3.5 a1.3,1.3 0 0 1 -2.6,0 z M674.5,541.5 a3,3 0 0 0 6,0 M677.5,544.5 v3" stroke="#5ac8d8" stroke-width="1" fill="none"/>
<text x="692.5" y="545" font-size="6" fill="#e8e8e8" font-family="Liberation Sans">УКР</text>
<path d="M715,541.5 a6,6 0 0 1 8,0 M716.3,543 a4,4 0 0 1 5.4,0 M719,545.5 l-1,-1 h2 z" stroke="#eee" stroke-width="0.9" fill="none"/>
<path d="M728.5,541 h1.5 l2,-2 v7 l-2,-2 h-1.5 z" fill="#eee"/><path d="M733,540.5 a3,3 0 0 1 0,4" stroke="#999" stroke-width="0.6" fill="none"/>
<rect x="741" y="541" width="8.5" height="5" rx="1" fill="#eee"/><path d="M742,540 l2,-2" stroke="#eee" stroke-width="0.8"/>
<text x="790" y="540.5" font-size="6.3" fill="#f0f0f0" font-family="Liberation Sans" text-anchor="end">11:27</text>
<text x="790" y="549.5" font-size="6" fill="#f0f0f0" font-family="Liberation Sans" text-anchor="end">12.06.2025</text>
</svg>
<!-- bottom bar -->
<div class="a" style="left:12px;top:571.5px;color:#fff;font-size:7.5px;font-weight:bold;line-height:10px">11:27</div>
<div class="a" style="left:36px;top:572px;width:1px;height:9px;background:#777"></div>
<div class="a" style="left:44px;top:571px;color:#fff;font-size:8.4px;font-weight:bold;line-height:10px">Захист КП</div>

<div class="a" style="left:301px;top:564px;width:47px;height:25px;border-radius:7px;background:#5c1612"></div>
<div class="a" style="left:322px;top:564px;width:26px;height:25px;border-radius:7px;background:#f9dedc"></div>
<div class="a" style="left:352px;top:564px;width:47px;height:25px;border-radius:7px;background:#5c1612"></div>
<div class="a" style="left:373px;top:564px;width:26px;height:25px;border-radius:7px;background:#f9dedc"></div>
<div class="mb" style="left:403px;width:29px"></div>
<div class="mb" style="left:437px;width:29px"></div>
<div class="mb" style="left:470px;width:30px"></div>
<div class="mb" style="left:504px;width:30px"></div>
<div class="mb" style="left:538px;width:19px"></div>
<div class="mb" style="left:561px;width:38px;background:#dc362e"></div>

<!-- meet bar icons -->
<svg class="a" style="left:290px;top:560px" width="320" height="34" viewBox="290 560 320 34">
<g stroke="#f2b8b5" stroke-width="1.1" fill="none"><path d="M309.5,578 l2.5,-2.5 l2.5,2.5"/><path d="M360.5,578 l2.5,-2.5 l2.5,2.5"/></g>
<g stroke="#601410" stroke-width="1.1" fill="none">
<path d="M333.3,572.5 a1.7,1.7 0 0 1 3.4,0 v3.5 a1.7,1.7 0 0 1 -3.4,0 z M331.5,576 a3.5,3.5 0 0 0 7,0 M335,579.5 v2 M330.5,571 l9,10.5" stroke-width="1"/>
<path d="M380.5,572.5 h7.5 v7.5 h-7.5 z M388,575 l3,-2 v6.5 l-3,-2 M379.5,571 l11,10.5" stroke-width="1"/>
</g>
<g stroke="#e3e3e3" stroke-width="1.1" fill="none">
<path d="M412,572.5 h11 v7 h-11 z M410.5,581.5 h14 M417.5,578 v-4 M415.8,575.5 l1.7,-1.7 l1.7,1.7" stroke-width="1"/>
<circle cx="451.5" cy="576.5" r="5.8"/><path d="M448.6,577.8 a2.9,2.9 0 0 0 5.8,0 z" fill="#e3e3e3" stroke="none"/><circle cx="449.6" cy="575" r="0.9" fill="#e3e3e3" stroke="none"/><circle cx="453.4" cy="575" r="0.9" fill="#e3e3e3" stroke="none"/>
<path d="M479,571.5 h11 v9.5 h-11 z M483.5,574.3 h-2 v3.4 h2 M488,574.3 h-2 v3.4 h2" stroke-width="1"/>
<path transform="translate(5,0)" d="M514.5,582 c-3,0 -5,-2 -6,-5 l-1,-2.5 c0.5,-0.5 1.5,-0.5 2,0.5 l1,2 v-7.5 a0.9,0.9 0 0 1 1.8,0 v5 v-6.5 a0.9,0.9 0 0 1 1.8,0 v6.5 v-5.5 a0.9,0.9 0 0 1 1.8,0 v5.5 v-4 a0.9,0.9 0 0 1 1.8,0 v7 c0,3 -2,5 -4,5 z"/>
</g>
<g fill="#e3e3e3"><circle cx="547.5" cy="572.5" r="1.1"/><circle cx="547.5" cy="576.5" r="1.1"/><circle cx="547.5" cy="580.5" r="1.1"/></g>
<path d="M573.5,578.5 c2.5,-3.5 10,-3.5 12.5,0 l-1.7,1.7 l-2.3,-1.2 v-1.5 c-1.7,-0.6 -2.8,-0.6 -4.5,0 v1.5 l-2.3,1.2 z" fill="#fff"/>
</svg>
<svg class="a" style="left:770px;top:556px" width="130" height="34" viewBox="770 556 130 34">
<g stroke="#e3e3e3" stroke-width="1.1" fill="none">
<circle cx="780.2" cy="576.5" r="5.3"/><path d="M780.2,575.5 v3.5"/>
<path d="M800.5,581 c0,-2.5 2,-3.5 4.5,-3.5 c2.5,0 4.5,1 4.5,3.5 z" fill="#e3e3e3"/><circle cx="805" cy="573.5" r="2.2" fill="#e3e3e3"/><path d="M809,571.5 a2,2 0 0 1 0,4 M810.5,577.5 c1.5,0.5 2.5,1.5 2.5,3.5"/>
<path d="M825.5,571 h11 v8.5 h-8 l-3,3 z"/><path d="M828,573.5 h6 M828,575.5 h6 M828,577.3 h4"/>
<path d="M877.5,575 v-2 a3.5,3.5 0 0 1 7,0 v2 M876.5,575 h9 v7 h-9 z"/>
</g>
<circle cx="780.2" cy="573.3" r="0.8" fill="#e3e3e3"/>
<g fill="#e3e3e3"><circle cx="852.5" cy="573" r="1"/><circle cx="856" cy="573" r="1"/><circle cx="859.5" cy="573" r="1"/><circle cx="852.5" cy="576.5" r="1"/><circle cx="856" cy="576.5" r="1"/><circle cx="859.5" cy="576.5" r="1"/><circle cx="852.5" cy="580" r="1"/><circle cx="856" cy="580" r="1"/><circle cx="859.5" cy="580" r="1"/></g>
<circle cx="885" cy="580.5" r="3" fill="#131313"/><circle cx="885" cy="580.5" r="2.3" fill="#e3e3e3"/>
<circle cx="835" cy="568.7" r="2" fill="#7cacf8"/>
<rect x="805.5" y="559" width="14.5" height="10" rx="5" fill="#5f6368"/>
<text x="812.7" y="566.5" font-size="7" fill="#fff" font-family="Liberation Sans" text-anchor="middle" font-weight="bold">11</text>
</g>
</svg>
<div class="a" style="left:0;top:598px;width:900px;height:1px;background:#7f9fb8"></div><div class="a" style="left:9px;top:594px;width:18px;height:18px;border-radius:50%;background:#a9bccb"></div><div class="a" style="left:139px;top:598px;width:160px;height:1px;background:repeating-linear-gradient(90deg,#e8eef4 0 29px,#7f9fb8 29px 33px)"></div>
</body></html>
